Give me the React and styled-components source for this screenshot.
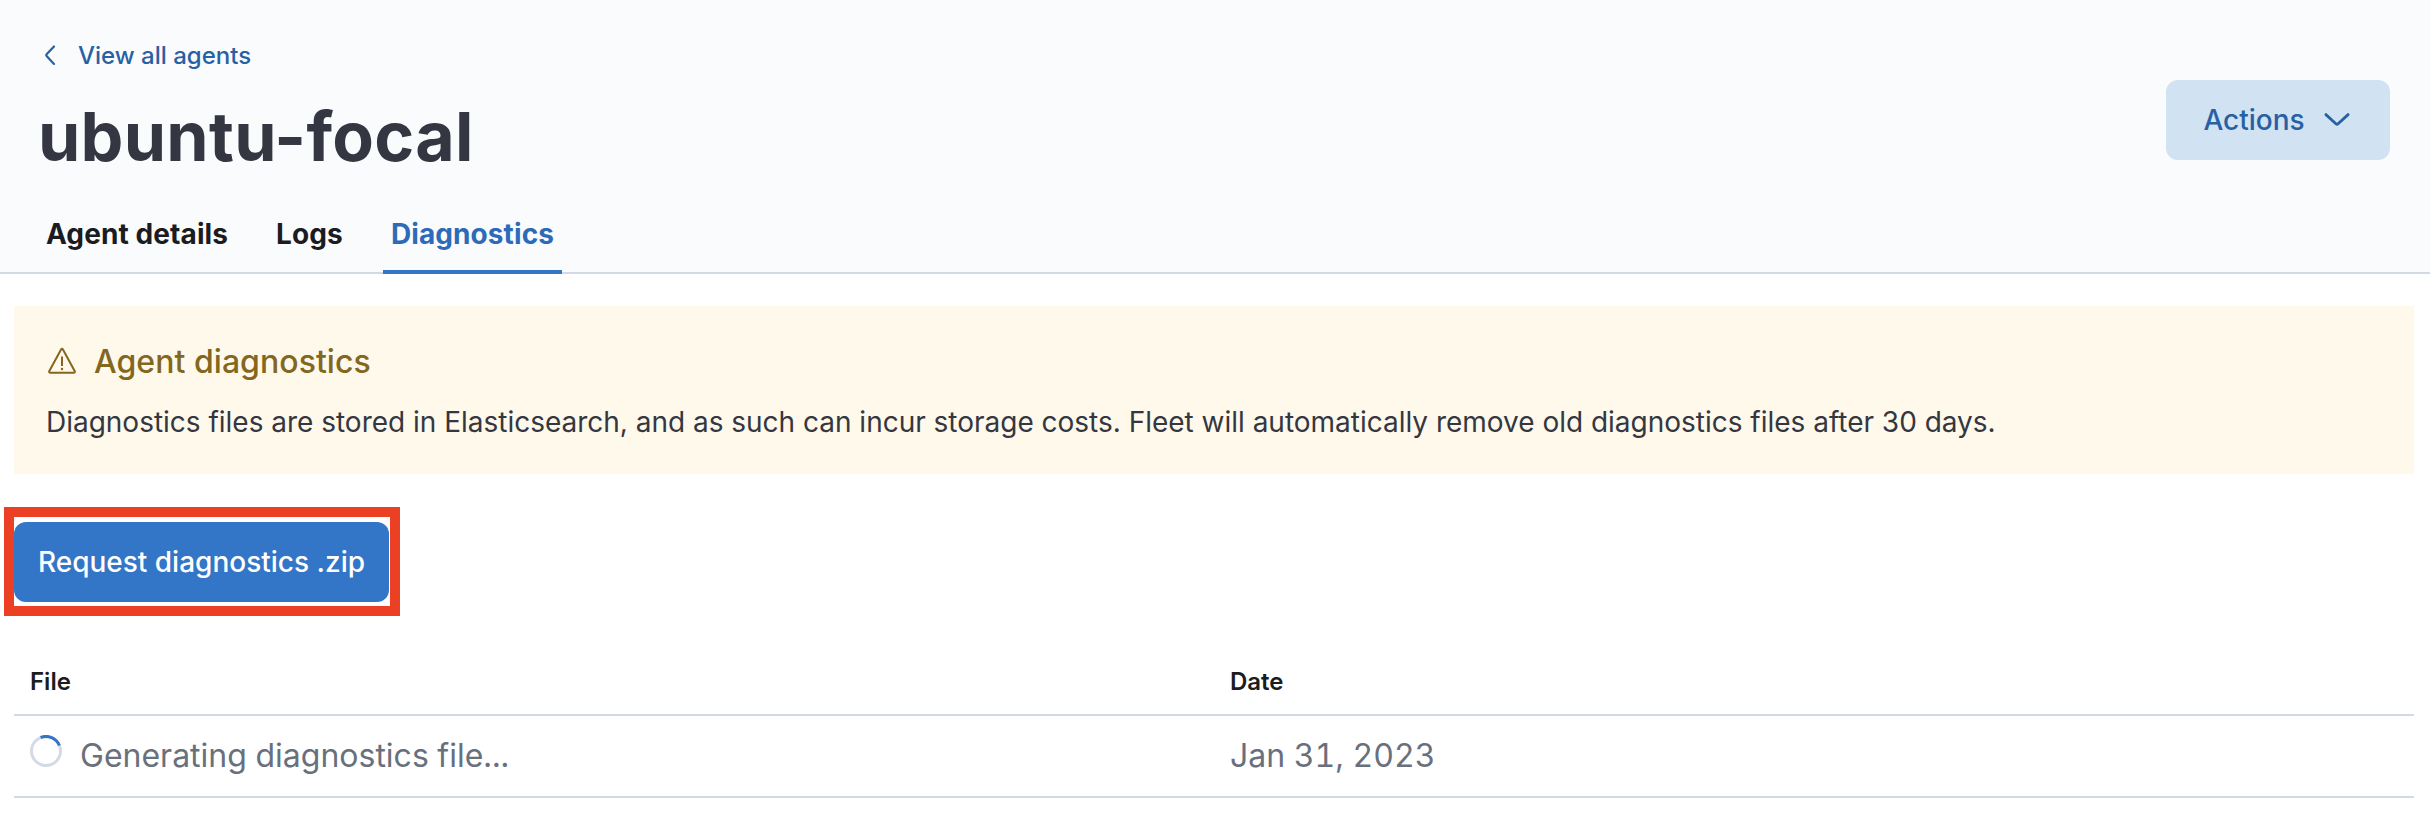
import React from "react";
import styled, { createGlobalStyle } from "styled-components";

const GlobalStyle = createGlobalStyle`
  * { box-sizing: border-box; }
  body {
    margin: 0;
    background: #ffffff;
    color: #343741;
    font-family: "Inter", "Liberation Sans", sans-serif;
  }
  button { font-family: inherit; border: 0; margin: 0; }
`;

const Page = styled.div`
  width: 100%;
  min-height: 838px;
  display: flex;
  flex-direction: column;
`;

const Header = styled.header`
  height: 274px;
  padding: 0 40px 0 38px;
  display: flex;
  justify-content: space-between;
  align-items: flex-start;
  background: #fafbfd;
  border-bottom: 2px solid #d3dae6;
`;

const HeaderMain = styled.div`
  display: flex;
  flex-direction: column;
  align-items: flex-start;
`;

const BackLink = styled.a`
  display: flex;
  align-items: center;
  height: 48px;
  margin-top: 31px;
  color: #2861a3;
  font-size: 24px;
  font-weight: 500;
  svg { margin-right: 16px; }
`;

const Title = styled.h1`
  margin: 17px 0 0;
  height: 80px;
  line-height: 80px;
  font-size: 68px;
  font-weight: 700;
  letter-spacing: 0.28px;
`;

const Tabs = styled.nav`
  display: flex;
  gap: 32px;
  height: 80px;
  margin-top: 18px;
  margin-bottom: -2px;
`;

const Tab = styled.a`
  padding: 0 8px;
  line-height: 80px;
  font-size: 28px;
  font-weight: 700;
  letter-spacing: 0.1px;
  color: ${(p) => (p.$active ? "#2d6bb8" : "#1a1c21")};
  box-shadow: ${(p) => (p.$active ? "inset 0 -4px 0 #3375c7" : "none")};
`;

const Button = styled.button`
  display: flex;
  align-items: center;
  justify-content: center;
  gap: 16px;
  height: 80px;
  width: ${(p) => p.$width}px;
  margin-top: ${(p) => p.$top || 0}px;
  padding: 0;
  border-radius: 12px;
  font-size: 28px;
  font-weight: 500;
  color: ${(p) => (p.$fill ? "#ffffff" : "#2861a3")};
  background: ${(p) => (p.$fill ? "#3375c7" : "#d1e2f2")};
`;

const Content = styled.main`
  display: flex;
  flex-direction: column;
  align-items: flex-start;
  padding: 32px 16px 0 14px;
`;

const Callout = styled.section`
  width: 100%;
  height: 168px;
  padding: 31px 32px;
  background: #fff9eb;
`;

const CalloutTitle = styled.h2`
  display: flex;
  align-items: center;
  gap: 16px;
  margin: 0;
  height: 48px;
  font-size: 32px;
  font-weight: 500;
  letter-spacing: 0.04px;
  color: #83671f;
`;

const CalloutText = styled.p`
  margin: 16px 0 0;
  line-height: 42px;
  font-size: 28px;
  letter-spacing: -0.012px;
`;

const Highlight = styled.div`
  margin: 33px 0 0 -10px;
  width: 396px;
  height: 109px;
  padding-top: 5px;
  border: 10px solid #ec4025;
`;

const Table = styled.table`
  width: 100%;
  margin-top: 32px;
  border-collapse: collapse;
  table-layout: fixed;
`;

const HeadCell = styled.th`
  height: 67px;
  padding: 0 16px;
  border-bottom: 2px solid #d3dae6;
  text-align: left;
  font-size: 24px;
  font-weight: 600;
  color: #1a1c21;
`;

const Cell = styled.td`
  height: 82px;
  padding: 0 16px 2px;
  border-bottom: 2px solid #d3dae6;
  font-size: 32px;
  font-variant-numeric: tabular-nums;
  color: #69707d;
`;

const FileStatus = styled.div`
  display: flex;
  align-items: center;
  gap: 18px;
  svg { margin-top: -9px; }
`;

const ChevronLeft = () => (
  <svg width="24" height="24" viewBox="0 0 24 24" fill="none" stroke="currentColor" strokeWidth="2.2" strokeLinecap="round" strokeLinejoin="round">
    <path d="M16 3.500 8.600 11.200a1.400 1.400 0 0 0 0 1.900L16 20.900" />
  </svg>
);

const ChevronDown = () => (
  <svg width="32" height="32" viewBox="0 0 32 32" fill="none" stroke="currentColor" strokeWidth="2.8" strokeLinecap="round" strokeLinejoin="round">
    <path d="M4.900 10.600 14.900 19.700a1.600 1.600 0 0 0 2.200 0L27.100 10.600" />
  </svg>
);

const WarningIcon = () => (
  <svg width="32" height="32" viewBox="0 0 32 32" fill="none" stroke="currentColor" strokeWidth="2" strokeLinejoin="round">
    <path d="M15.200 4.300 3.200 26.200a1.100 1.100 0 0 0 1 1.600h23.600a1.100 1.100 0 0 0 1-1.600L16.800 4.300a.9.9 0 0 0-1.600 0z" />
    <path d="M16 11.500v9.500" />
    <circle cx="16" cy="24" r="1.200" fill="currentColor" stroke="none" />
  </svg>
);

const Spinner = () => (
  <svg width="32" height="32" viewBox="0 0 32 32" fill="none" strokeWidth="3">
    <circle cx="16" cy="16" r="14.500" stroke="#d3dae6" />
    <path d="M10.600 2.500A14.500 14.500 0 0 1 29.400 10.500" stroke="#3375c7" />
  </svg>
);

export default function App() {
  return (
    <Page>
      <GlobalStyle />
      <Header>
        <HeaderMain>
          <BackLink><ChevronLeft />View all agents</BackLink>
          <Title>ubuntu-focal</Title>
          <Tabs>
            <Tab>Agent details</Tab>
            <Tab>Logs</Tab>
            <Tab $active>Diagnostics</Tab>
          </Tabs>
        </HeaderMain>
        <Button $width={224} $top={80}>Actions<ChevronDown /></Button>
      </Header>
      <Content>
        <Callout>
          <CalloutTitle><WarningIcon />Agent diagnostics</CalloutTitle>
          <CalloutText>
            Diagnostics files are stored in Elasticsearch, and as such can incur storage costs. Fleet will automatically remove old diagnostics files after 30 days.
          </CalloutText>
        </Callout>
        <Highlight>
          <Button $fill $width={375}>Request diagnostics .zip</Button>
        </Highlight>
        <Table>
          <thead>
            <tr><HeadCell>File</HeadCell><HeadCell>Date</HeadCell></tr>
          </thead>
          <tbody>
            <tr>
              <Cell><FileStatus><Spinner />Generating diagnostics file...</FileStatus></Cell>
              <Cell>Jan 31, 2023</Cell>
            </tr>
          </tbody>
        </Table>
      </Content>
    </Page>
  );
}
